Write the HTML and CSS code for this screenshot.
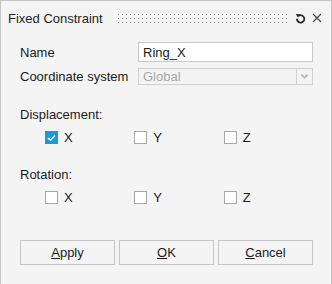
FILE: index.html
```html
<!DOCTYPE html>
<html lang="en">

<head>
    <meta charset="utf-8">
    <title>Fixed Constraint</title>
    <link rel="stylesheet" href="styles.css">
</head>

<body>
    <div class="dialog">
        <header class="titlebar">
            <span class="title">Fixed Constraint</span>
            <span class="grip"></span>
            <svg class="icon reset" width="11" height="11" viewBox="0 0 11 11">
                <path d="M3.4 2.9 A3.7 3.7 0 1 1 1.9 5.8" fill="none" stroke="#2a2a2a" stroke-width="1.8" />
                <path d="M0.8 1.0 L5.2 1.2 L3.0 4.8 Z" fill="#2a2a2a" />
            </svg>
            <svg class="icon close" width="10" height="10" viewBox="0 0 10 10">
                <path d="M1 1 L9 9 M9 1 L1 9" stroke="#444" stroke-width="1.1" />
            </svg>
        </header>

        <section class="form">
            <div class="row">
                <label>Name</label>
                <input class="field" type="text" value="Ring_X">
            </div>
            <div class="row">
                <label>Coordinate system</label>
                <div class="combo">
                    <span class="combo-text">Global</span>
                    <span class="combo-btn">
                        <svg width="7" height="5" viewBox="0 0 7 5">
                            <path d="M0.5 0.5 L3.5 3.8 L6.5 0.5" fill="none" stroke="#b4b4b4" stroke-width="1.6" />
                        </svg>
                    </span>
                </div>
            </div>

            <h3 class="group first">Displacement:</h3>
            <div class="checks">
                <span class="check"><span class="box on"><svg width="9" height="8" viewBox="0 0 9 8"><path d="M1 4 L3.5 6.3 L8 1.5" fill="none" stroke="#fff" stroke-width="1.5" /></svg></span>X</span>
                <span class="check"><span class="box"></span>Y</span>
                <span class="check"><span class="box"></span>Z</span>
            </div>

            <h3 class="group">Rotation:</h3>
            <div class="checks">
                <span class="check"><span class="box"></span>X</span>
                <span class="check"><span class="box"></span>Y</span>
                <span class="check"><span class="box"></span>Z</span>
            </div>

            <div class="buttons">
                <button><u>A</u>pply</button>
                <button><u>O</u>K</button>
                <button><u>C</u>ancel</button>
            </div>
        </section>
    </div>
</body>

</html>
```

FILE: styles.css
```css
* {
    box-sizing: border-box;
}

body {
    margin: 0;
    background-color: #f4f4f4;
    font-family: "Liberation Sans", Arial, sans-serif;
    font-size: 13px;
    color: #1a1a1a;
}

.dialog {
    width: 332px;
    height: 284px;
    border: 1px solid #c4c4c4;
    border-bottom: none;
    background-color: #f4f4f4;
}

.titlebar {
    height: 34px;
    display: flex;
    align-items: center;
    padding-left: 7px;
    padding-right: 9px;
}

.title {
    font-size: 13px;
    color: #1e1e1e;
}

/* dotted drag handle: vertical lines masked by horizontal stripes */
.grip {
    flex: 1;
    height: 9px;
    margin-left: 15px;
    margin-right: 8px;
    background-image: linear-gradient(to bottom, transparent 1px, #f4f4f4 1px),
        linear-gradient(to right, #8c8c8c 1px, transparent 1px);
    background-size: 4px 4px;
}

.icon {
    display: block;
}

.reset {
    margin-right: 6px;
}

.form {
    padding: 7px 18px 0 19px;
}

.row {
    display: grid;
    grid-template-columns: 118px 175px;
    align-items: center;
    margin-bottom: 6px;
}

.row label {
    font-size: 13px;
}

.field {
    height: 20px;
    border: 1px solid #c8c8c8;
    background-color: #fff;
    font-family: "Liberation Sans", Arial, sans-serif;
    font-size: 13px;
    color: #1a1a1a;
    padding: 0 4px;
    margin: 0;
    outline: none;
}

.combo {
    height: 17px;
    display: flex;
    border: 1px solid #d0d0d0;
    background-color: #f4f4f4;
}

.combo-text {
    flex: 1;
    color: #a6a6a6;
    padding-left: 4px;
    line-height: 15px;
}

.combo-btn {
    width: 16px;
    border-left: 1px solid #d0d0d0;
    display: flex;
    align-items: center;
    justify-content: center;
}

.group {
    font-weight: normal;
    font-size: 13px;
    line-height: 15px;
    margin: 23px 0 9px 0;
}

.group.first {
    margin-top: 22px;
}

.checks {
    display: flex;
    padding-left: 25px;
    height: 13px;
    align-items: center;
}

.check {
    width: 91px;
    display: flex;
    align-items: center;
    font-size: 13px;
}

.box {
    width: 13px;
    height: 13px;
    border: 1px solid #a8a8a8;
    background-color: #fff;
    margin-right: 6px;
    display: flex;
    align-items: center;
    justify-content: center;
}

.box.on {
    background-color: #1a9ad8;
    border-color: #1a9ad8;
}

.buttons {
    display: flex;
    gap: 4px;
    margin-top: 36px;
}

.buttons button {
    width: 95px;
    height: 25px;
    border: 1px solid #c6c6c6;
    background-color: #f4f4f4;
    font-family: "Liberation Sans", Arial, sans-serif;
    font-size: 13px;
    color: #1a1a1a;
    padding: 0;
}
```
